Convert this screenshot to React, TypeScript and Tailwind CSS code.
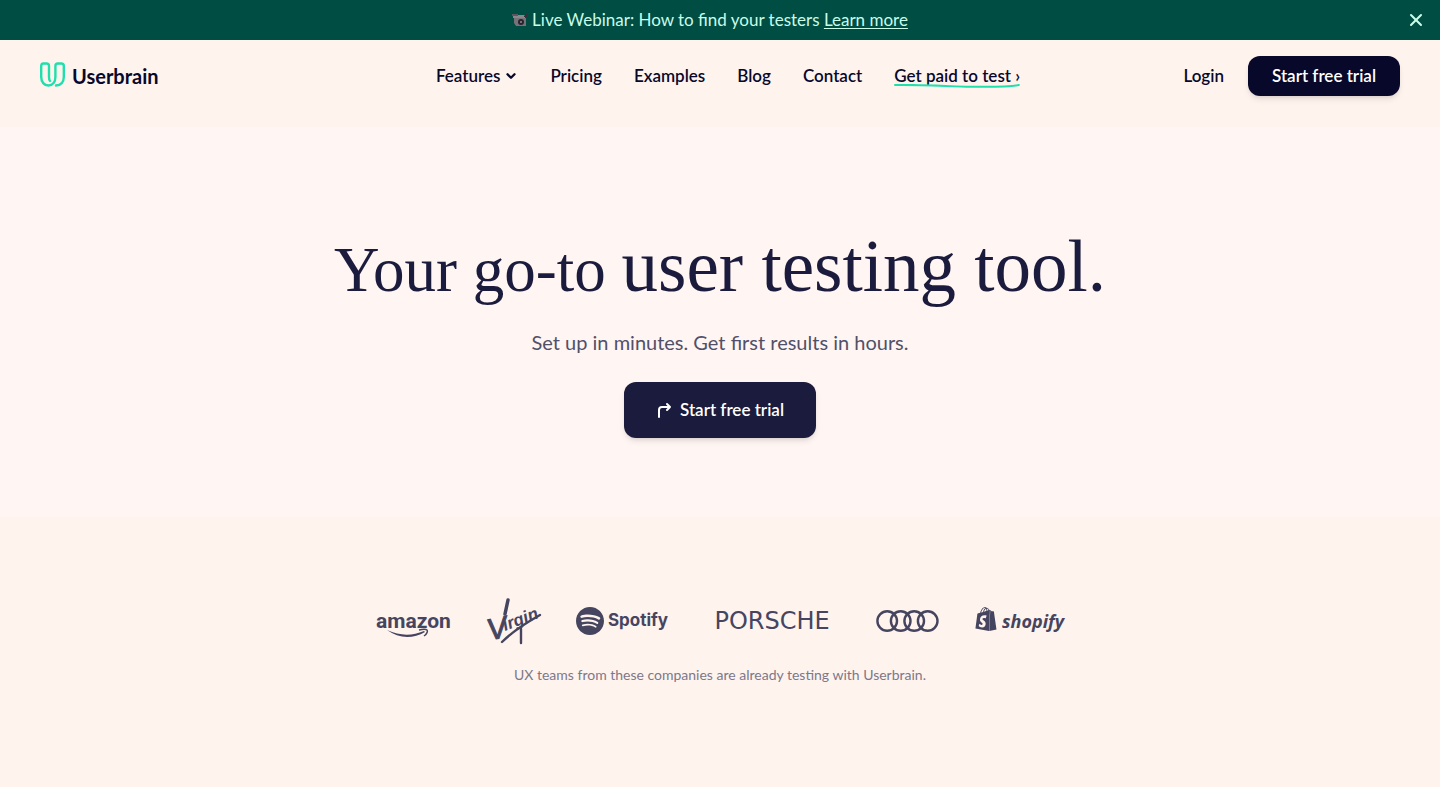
import { ChevronDown, X } from "lucide-react";
import { SiShopify, SiSpotify } from "react-icons/si";

const links = ["Pricing", "Examples", "Blog", "Contact"];

function Banner() {
    return (
        <div className="flex h-10 items-center bg-[#004d43] px-[14px] text-[#c8fbe8]">
            <p className="flex flex-1 items-center justify-center gap-1 text-[17px] leading-6">
                <svg width="16" height="14" viewBox="0 0 16 14" aria-hidden="true">
                    <path d="M1 2h12v3H1z" fill="#8c8589" />
                    <path d="M2 5h12v8H4L2 10z" fill="#77717a" />
                    <path d="M12 3l3-3v4h-3z" fill="#352f38" />
                    <circle cx="9" cy="9" r="3" fill="#28242c" />
                    <circle cx="9" cy="9" r="1" fill="#8f8993" />
                    <path d="M0 1h6v2H0z" fill="#5b5760" />
                </svg>
                <span>
                    Live Webinar: How to find your testers{" "}
                    <a href="#" className="underline underline-offset-2">Learn more</a>
                </span>
            </p>
            <button type="button" aria-label="Close">
                <X size={20} strokeWidth={2.5} />
            </button>
        </div>
    );
}

function Header() {
    return (
        <header className="flex h-[87px] items-start px-10 pt-4 text-[17px] leading-6 font-semibold text-[#08082b]">
            <div className="flex h-10 flex-1 items-center">
                <a href="#" className="flex items-center gap-[7px]">
                    <svg width="25" height="28" viewBox="0 0 25 28" fill="none" stroke="#1fe0ac" strokeWidth="2.4" strokeLinecap="round" aria-hidden="true">
                        <path d="M10 19C9 18 9 17 9 15V4a2.500 2.500 0 0 0-2.500-2.500h-3A2.500 2.500 0 0 0 1.200 4v11c0 5 3 8.500 7.200 8.500 4.500 0 7-3.500 7-8.500V4a2.500 2.500 0 0 1 2.500-2.500h3.400A2.500 2.500 0 0 1 23.800 4v11c0 5-3 8.500-7.800 8.500" />
                    </svg>
                    <span className="text-[20px] leading-6 font-bold">Userbrain</span>
                </a>
            </div>
            <nav className="flex h-10 items-center gap-8 pl-4">
                <button type="button" className="flex items-center gap-1">
                    Features
                    <ChevronDown size={14} strokeWidth={4} />
                </button>
                {links.map((link) => (
                    <a key={link} href="#">{link}</a>
                ))}
                <a href="#" className="relative">
                    Get paid to test ›
                    <svg className="absolute left-0 top-5 h-2 w-full" viewBox="0 0 126 8" preserveAspectRatio="none" fill="none" aria-hidden="true">
                        <path d="M1 1C40 0 95 6 125 1" stroke="#1fe0ac" strokeWidth="2" strokeLinecap="round" />
                    </svg>
                </a>
            </nav>
            <div className="flex h-10 flex-1 items-center justify-end gap-6">
                <a href="#">Login</a>
                <a href="#" className="flex h-10 items-center rounded-xl bg-[#08082b] px-6 text-white shadow-md">
                    Start free trial
                </a>
            </div>
        </header>
    );
}

function Hero() {
    return (
        <section className="flex h-[390px] flex-col items-center bg-[#fff5f2] pt-24 text-center text-[#1b1b3d]">
            <h1 className="font-['Liberation_Serif',serif] text-[63px] leading-[88px]">
                Your go-to <span className="text-[73px]">user testing tool.</span>
            </h1>
            <p className="mt-3 text-xl leading-8 text-[#515069]">
                Set up in minutes. Get first results in hours.
            </p>
            <a href="#" className="mt-6 flex h-14 items-center gap-2 rounded-xl bg-[#1b1b3d] px-8 text-[17px] leading-6 font-semibold text-white shadow-md">
                <svg width="16" height="16" viewBox="0 0 16 16" fill="none" stroke="currentColor" strokeWidth="2" strokeLinecap="round" strokeLinejoin="round" aria-hidden="true">
                    <path d="M3 15V8a3 3 0 0 1 3-3h8M11 2l3 3-3 3" />
                </svg>
                Start free trial
            </a>
        </section>
    );
}

function Logos() {
    return (
        <section className="flex flex-col items-center pt-20 pb-24">
            <div className="flex h-12 items-center gap-[35px] text-[#46455f]">
                <svg width="77" height="32" viewBox="0 0 77 32" className="mt-3 overflow-visible" role="img" aria-label="amazon">
                    <text x="0" y="17" fill="currentColor" className="font-[Roboto,sans-serif] text-[21px] font-bold">amazon</text>
                    <path d="M11 19c12 9 26 9 38 2l-1-1c-12 5-24 5-37-1z" fill="currentColor" />
                    <path d="M43 19c4-1 7-1 8 0s0 4-3 6" fill="none" stroke="currentColor" strokeWidth="1.5" />
                </svg>
                <svg width="53" height="48" viewBox="0 0 53 48" className="overflow-visible" role="img" aria-label="Virgin">
                    <g fill="currentColor" className="font-['Liberation_Sans',sans-serif] italic">
                        <text x="1" y="42" transform="rotate(-12 8 42)" className="text-[30px]" stroke="currentColor">V</text>
                        <text x="17" y="34" transform="rotate(-21 17 34)" className="text-[17px] font-bold">irgin</text>
                    </g>
                    <path d="M14 45C24 35 36 27 52 18M33 32v14" fill="none" stroke="currentColor" strokeWidth="2.400" strokeLinecap="round" />
                    <path d="M17 17L20 3" stroke="currentColor" strokeWidth="3.500" strokeLinecap="round" />
                </svg>
                <div className="flex items-center gap-1">
                    <SiSpotify size={28} />
                    <span className="font-[Inter,sans-serif] text-[17px] font-bold">Spotify</span>
                </div>
                <span className="w-[138px] text-center font-['DejaVu_Sans',sans-serif] text-2xl leading-6">PORSCHE</span>
                <svg width="63" height="22" viewBox="0 0 63 22" fill="none" stroke="currentColor" strokeWidth="2.4" role="img" aria-label="Audi">
                    <circle cx="11.2" cy="11" r="9.8" />
                    <circle cx="24.7" cy="11" r="9.8" />
                    <circle cx="38.2" cy="11" r="9.8" />
                    <circle cx="51.7" cy="11" r="9.8" />
                </svg>
                <div className="flex items-center gap-1">
                    <SiShopify size={24} className="-mt-1" />
                    <span className="font-['Open_Sans',sans-serif] text-[18px] leading-6 font-bold italic">shopify</span>
                </div>
            </div>
            <p className="mt-5 text-sm leading-5 text-[#7c7889]">
                UX teams from these companies are already testing with Userbrain.
            </p>
        </section>
    );
}

export default function App() {
    return (
        <div className="min-h-screen bg-[#fff3ee] font-[Lato,sans-serif]">
            <Banner />
            <Header />
            <main>
                <Hero />
                <Logos />
            </main>
        </div>
    );
}
